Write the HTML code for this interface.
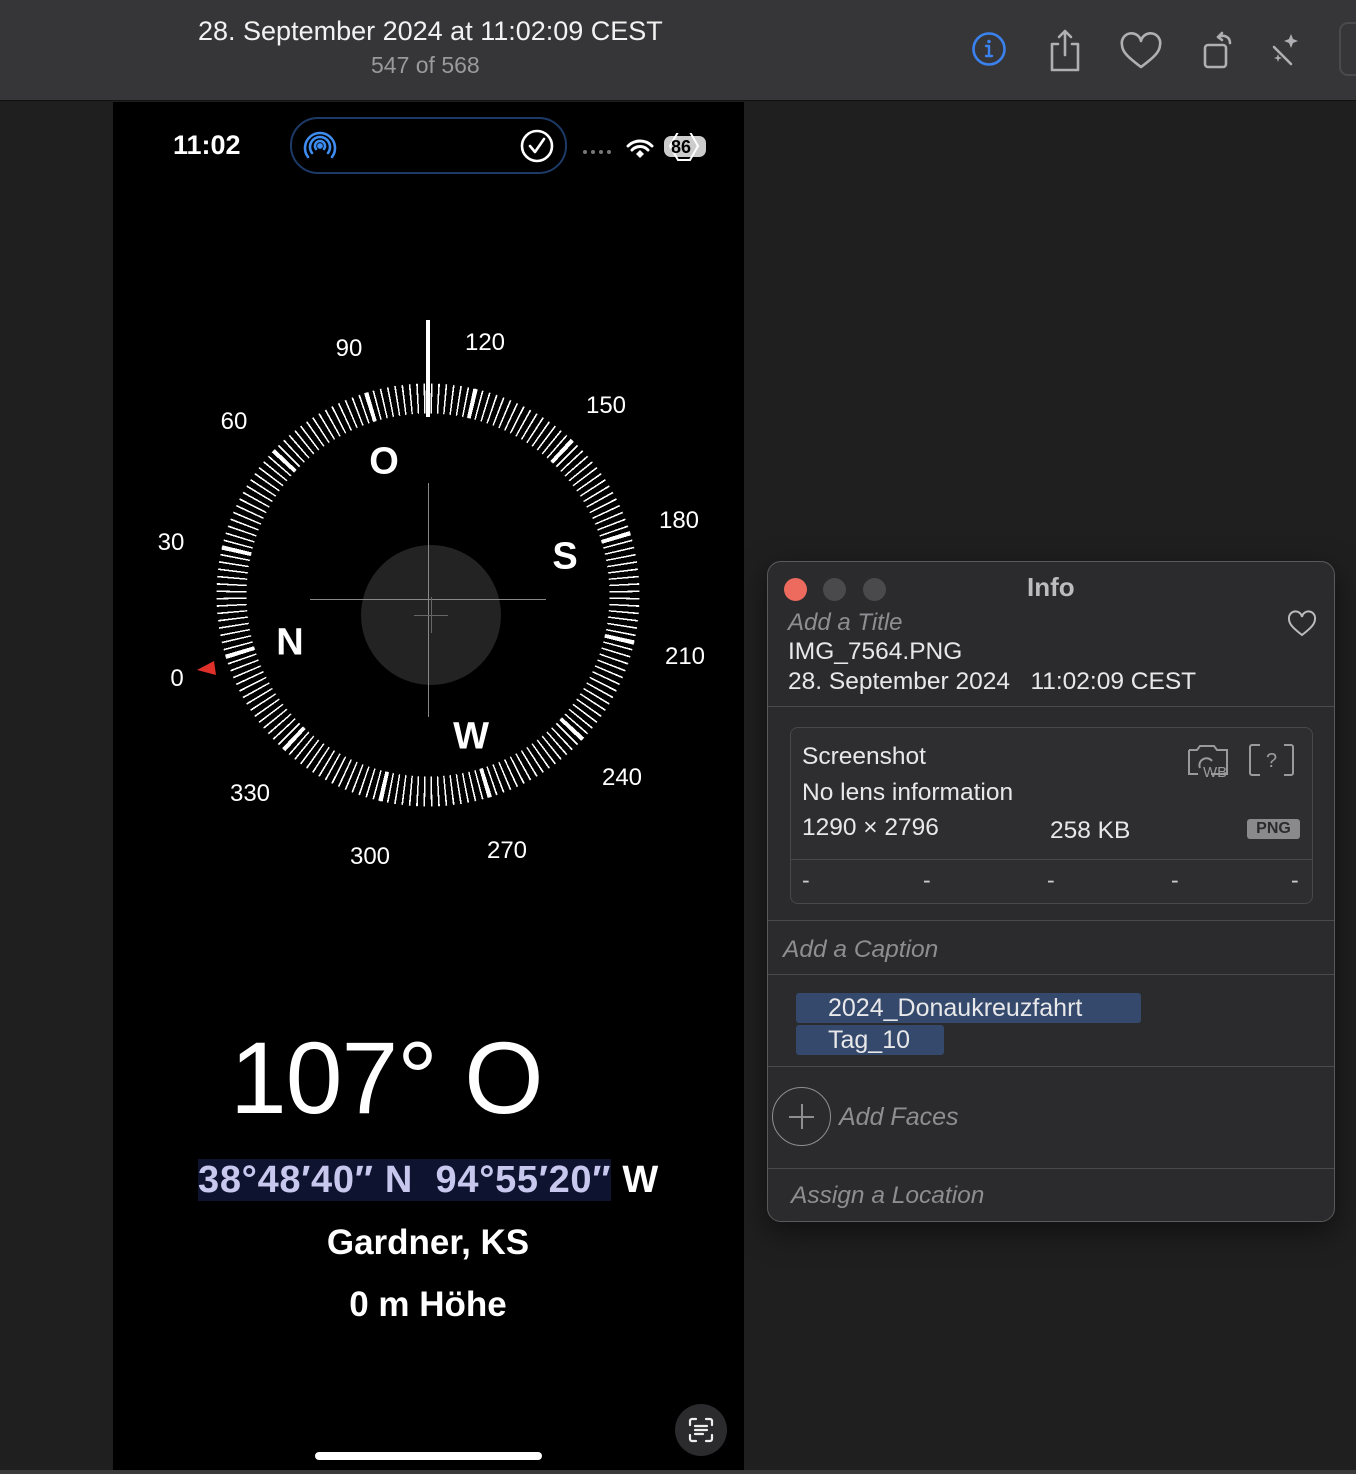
<!DOCTYPE html>
<html><head><meta charset="utf-8"><style>
*{margin:0;padding:0;box-sizing:border-box}
body{width:1356px;height:1474px;background:#1f1f1f;font-family:"Liberation Sans",sans-serif;position:relative;overflow:hidden;color:#fff}
.a{position:absolute;white-space:nowrap}
.top{position:absolute;left:0;top:0;width:1356px;height:101px;background:#363638;border-bottom:1px solid #111}
.phone{position:absolute;left:113px;top:102px;width:631px;height:1368px;background:#000}
.ring{position:absolute;left:216px;top:383px;width:424px;height:424px;border-radius:50%;
 -webkit-mask:radial-gradient(circle,transparent 181px,#000 182px,#000 211px,transparent 212px);
 mask:radial-gradient(circle,transparent 181px,#000 182px,#000 211px,transparent 212px)}
.r1{background:repeating-conic-gradient(from 0.78deg,#fff 0 0.45deg,transparent 0.45deg 2deg)}
.r2{background:repeating-conic-gradient(from 12.4deg,#fff 0 1.2deg,transparent 1.2deg 30deg)}
.lbl{position:absolute;font-size:24px;transform:translate(-50%,-50%);color:#fff}
.card{position:absolute;font-size:38px;font-weight:bold;transform:translate(-50%,-50%)}
.panel{position:absolute;left:767px;top:561px;width:568px;height:661px;background:#2b2b2d;border:1px solid #5a5a5c;border-radius:14px;overflow:hidden;box-shadow:0 10px 30px rgba(0,0,0,.5)}
.sep{position:absolute;left:0;width:568px;height:1px;background:#4a4a4c}
.it{font-style:italic;color:#8e8e92}
.tag{position:absolute;background:#34496b;border-radius:3px;font-size:25px;color:#e8e8ea;padding-left:32px;line-height:30px}
.t24{font-size:24.5px;color:#e8e8ea}
</style></head><body>
<div class="top"></div>
<div class="a" style="left:198px;top:16px;font-size:27px;color:#f2f2f2">28. September 2024 at 11:02:09 CEST</div>
<div class="a" style="left:371px;top:52px;font-size:23px;color:#9a9a9e">547 of 568</div>
<svg class="a" style="left:960px;top:20px" width="396" height="60" viewBox="0 0 396 60" fill="none" stroke-linecap="round" stroke-linejoin="round">
 <circle cx="29" cy="29" r="15.5" stroke="#3a82f0" stroke-width="2.6"/>
 <circle cx="29" cy="21.5" r="1.8" fill="#3a82f0"/>
 <path d="M26 26h3v10M26 36h6" stroke="#3a82f0" stroke-width="2.4"/>
 <g stroke="#b0b0b4" stroke-width="2.6">
  <path d="M98 24h-6v26h26v-26h-6M105 35v-24M99 17l6-6 6 6"/>
  <path d="M181 47c-12-9-19-15-19-22a8 8 0 0 1 19-4a8 8 0 0 1 19 4c0 7-7 13-19 22z"/>
  <rect x="245" y="25" width="21" height="22" rx="3"/>
  <path d="M258 17c6-3 12 0 12 6M258 17l4-4M258 17l4 3"/>
  <path d="M314 27l17 17"/>
 </g>
 <path d="M331 14l2 5 5 2-5 2-2 5-2-5-5-2 5-2zM318 34l1 3 3 1-3 1-1 3-1-3-3-1 3-1z" fill="#b0b0b4"/>
 <rect x="380" y="3" width="30" height="52" rx="8" stroke="#4a4a4c" stroke-width="2"/>
</svg>
<div class="phone"></div>
<div class="a" style="left:173px;top:130px;font-size:27px;font-weight:bold">11:02</div>
<div class="a" style="left:290px;top:117px;width:277px;height:57px;border:2px solid #1d3a66;border-radius:28px"></div>
<svg class="a" style="left:300px;top:127px" width="40" height="40" viewBox="0 0 40 40" fill="none" stroke="#3f8cf0" stroke-width="2.6" stroke-linecap="round">
 <path d="M8 30a15 15 0 1 1 24 0M12 26a10 10 0 1 1 16 0M16 22a5 5 0 1 1 8 0"/><circle cx="20" cy="19" r="1.6" fill="#3f8cf0"/>
</svg>
<svg class="a" style="left:518px;top:127px" width="38" height="38" viewBox="0 0 38 38" fill="none" stroke="#fff" stroke-width="2.6" stroke-linecap="round" stroke-linejoin="round">
 <circle cx="19" cy="19" r="15"/><path d="M12 19l5 6 9-13"/>
</svg>
<svg class="a" style="left:582px;top:148px" width="34" height="8"><g fill="#777"><circle cx="3" cy="4" r="2"/><circle cx="11" cy="4" r="2"/><circle cx="19" cy="4" r="2"/><circle cx="27" cy="4" r="2"/></g></svg>
<svg class="a" style="left:624px;top:133px" width="90" height="30" viewBox="0 0 90 30" fill="none">
 <path d="M4 13a17 17 0 0 1 24 0M8 17a11 11 0 0 1 16 0" stroke="#fff" stroke-width="3" stroke-linecap="round"/>
 <path d="M12 21l4-4 4 4-4 4z" fill="#fff"/>
 <rect x="40" y="3" width="42" height="21" rx="7" fill="#ccc"/>
 <path d="M54 -1l12 0 8 14-8 14-12 0-8-14z" stroke="#fff" stroke-width="2" fill="none"/>
 <text x="47" y="20" font-size="18" font-weight="bold" fill="#000" font-family="Liberation Sans">86</text>
</svg>
<div class="ring r1"></div>
<div class="ring r2"></div>
<div class="a" style="left:426px;top:320px;width:4px;height:97px;background:#fff"></div>
<div class="a" style="left:361px;top:545px;width:140px;height:140px;border-radius:50%;background:#232323"></div>
<div class="a" style="left:310px;top:599px;width:236px;height:1px;background:#888"></div>
<div class="a" style="left:428px;top:483px;width:1px;height:234px;background:#888"></div>
<div class="a" style="left:414px;top:615px;width:34px;height:1px;background:#666"></div>
<div class="a" style="left:431px;top:597px;width:1px;height:36px;background:#666"></div>
<svg class="a" style="left:196px;top:656px" width="22" height="22"><path d="M1 14L18 5 20 19z" fill="#e0302a"/></svg>
<div class="lbl" style="left:349px;top:349px">90</div>
<div class="lbl" style="left:485px;top:343px">120</div>
<div class="lbl" style="left:606px;top:406px">150</div>
<div class="lbl" style="left:679px;top:521px">180</div>
<div class="lbl" style="left:685px;top:657px">210</div>
<div class="lbl" style="left:622px;top:778px">240</div>
<div class="lbl" style="left:507px;top:851px">270</div>
<div class="lbl" style="left:370px;top:857px">300</div>
<div class="lbl" style="left:250px;top:794px">330</div>
<div class="lbl" style="left:177px;top:679px">0</div>
<div class="lbl" style="left:171px;top:543px">30</div>
<div class="lbl" style="left:234px;top:422px">60</div>
<div class="card" style="left:384px;top:462px">O</div>
<div class="card" style="left:565px;top:557px">S</div>
<div class="card" style="left:290px;top:643px">N</div>
<div class="card" style="left:471px;top:737px">W</div>
<div class="a" style="left:230px;top:1020px;font-size:102px;font-weight:300;letter-spacing:-1px">107° O</div>
<div class="a" style="left:198px;top:1160px;font-size:38px;font-weight:bold;color:#c8c8ee;letter-spacing:0.7px;line-height:40px"><span style="background:#0e1330">38°48′40″ N&nbsp; 94°55′20″</span> <span style="color:#fff">W</span></div>
<div class="a" style="left:0;width:856px;text-align:center;top:1223px;font-size:35px;font-weight:bold">Gardner, KS</div>
<div class="a" style="left:0;width:856px;text-align:center;top:1285px;font-size:35px;font-weight:bold">0 m Höhe</div>
<div class="a" style="left:675px;top:1404px;width:52px;height:52px;border-radius:50%;background:#2b2b2d"></div>
<svg class="a" style="left:687px;top:1416px" width="28" height="28" viewBox="0 0 28 28" fill="none" stroke="#eee" stroke-width="2.2" stroke-linecap="round">
 <path d="M3 9V5a2 2 0 0 1 2-2h4M19 3h4a2 2 0 0 1 2 2v4M25 19v4a2 2 0 0 1-2 2h-4M9 25H5a2 2 0 0 1-2-2v-4M8 10h12M8 14h12M8 18h8"/>
</svg>
<div class="a" style="left:315px;top:1452px;width:227px;height:8px;border-radius:4px;background:#fff"></div>
<div class="a" style="left:0;top:1470px;width:1356px;height:4px;background:#3a3a3c"></div>
<div class="panel">
 <div class="a" style="left:16px;top:16px;width:23px;height:23px;border-radius:50%;background:#ec6a5e"></div>
 <div class="a" style="left:55px;top:16px;width:23px;height:23px;border-radius:50%;background:#4a4a4c"></div>
 <div class="a" style="left:95px;top:16px;width:23px;height:23px;border-radius:50%;background:#4a4a4c"></div>
 <div class="a" style="left:259px;top:10px;font-size:26px;font-weight:bold;color:#bdbdc0">Info</div>
 <div class="a it" style="left:20px;top:47px;font-size:24px">Add a Title</div>
 <svg class="a" style="left:519px;top:48px" width="30" height="28" viewBox="0 0 30 28" fill="none" stroke="#bbb" stroke-width="2"><path d="M15 25C6 18 2 14 2 9a6.5 6.5 0 0 1 13-2a6.5 6.5 0 0 1 13 2c0 5-4 9-13 16z"/></svg>
 <div class="a t24" style="left:20px;top:76px">IMG_7564.PNG</div>
 <div class="a t24" style="left:20px;top:106px">28. September 2024 &nbsp; 11:02:09 CEST</div>
 <div class="sep" style="top:144px"></div>
 <div class="a" style="left:22px;top:165px;width:523px;height:177px;border:1px solid #48484a;border-radius:8px;background:#2e2e30"></div>
 <div class="a" style="left:23px;top:297px;width:521px;height:1px;background:#48484a"></div>
 <div class="a t24" style="left:34px;top:181px">Screenshot</div>
 <div class="a t24" style="left:34px;top:217px">No lens information</div>
 <div class="a t24" style="left:34px;top:252px">1290 × 2796</div>
 <div class="a t24" style="left:282px;top:255px">258 KB</div>
 <div class="a" style="left:479px;top:257px;width:53px;height:20px;background:#8a8a8c;border-radius:3px;font-size:16px;font-weight:bold;color:#2b2b2d;text-align:center;line-height:20px">PNG</div>
 <svg class="a" style="left:418px;top:180px" width="115" height="40" viewBox="0 0 115 40" fill="none" stroke="#9a9a9e" stroke-width="2">
  <path d="M3 8h8l3-4h14l3 4h10v24H25M3 8v24h9"/><path d="M14 26a7 7 0 0 1 12-7"/>
  <text x="17" y="35" font-size="15" fill="#9a9a9e" stroke="none" font-family="Liberation Sans">WB</text>
  <path d="M74 3h-8a2 2 0 0 0-2 2v26a2 2 0 0 0 2 2h8M98 3h7a2 2 0 0 1 2 2v26a2 2 0 0 1-2 2h-7"/>
  <text x="80" y="25" font-size="20" fill="#9a9a9e" stroke="none" font-family="Liberation Sans">?</text>
 </svg>
 <div class="a" style="left:34px;top:305px;font-size:23px;color:#ccc">-</div>
 <div class="a" style="left:155px;top:305px;font-size:23px;color:#ccc">-</div>
 <div class="a" style="left:279px;top:305px;font-size:23px;color:#ccc">-</div>
 <div class="a" style="left:403px;top:305px;font-size:23px;color:#ccc">-</div>
 <div class="a" style="left:523px;top:305px;font-size:23px;color:#ccc">-</div>
 <div class="sep" style="top:358px"></div>
 <div class="a it" style="left:15px;top:374px;font-size:24.5px">Add a Caption</div>
 <div class="sep" style="top:412px"></div>
 <div class="tag" style="left:28px;top:431px;width:345px">2024_Donaukreuzfahrt</div>
 <div class="tag" style="left:28px;top:463px;width:148px">Tag_10</div>
 <div class="sep" style="top:504px"></div>
 <div class="a" style="left:4px;top:525px;width:59px;height:59px;border:1.5px solid #8e8e92;border-radius:50%"></div>
 <div class="a" style="left:21px;top:554px;width:25px;height:1.5px;background:#8e8e92"></div>
 <div class="a" style="left:33px;top:542px;width:1.5px;height:25px;background:#8e8e92"></div>
 <div class="a it" style="left:71px;top:541px;font-size:25px">Add Faces</div>
 <div class="sep" style="top:606px"></div>
 <div class="a it" style="left:23px;top:620px;font-size:24.5px">Assign a Location</div>
</div>
</body></html>
